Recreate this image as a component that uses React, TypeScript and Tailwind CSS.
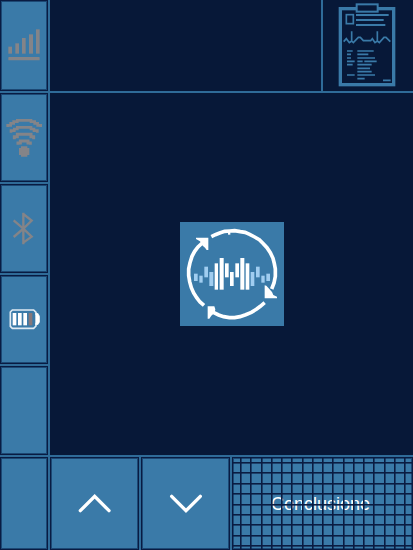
import type { ReactNode } from "react";

const tile =
  "flex items-center justify-center border border-[#091b42] bg-[#3a7aa8] shadow-[inset_0_0_0_1px_#1c4874]";

function StatusCell({ label, children }: { label?: string; children?: ReactNode }) {
  return (
    <li aria-label={label} className={`${tile} min-h-0 flex-1`}>
      {children}
    </li>
  );
}

function SignalIcon() {
  return (
    <svg viewBox="24 86 96 99" className="h-[33px] w-8 overflow-visible" fill="#848488" aria-hidden="true">
      <rect x="25" y="139" width="11" height="21" />
      <rect x="46" y="129" width="11" height="31" />
      <rect x="66" y="113" width="11" height="47" />
      <rect x="87" y="102" width="12" height="58" />
      <rect x="108" y="87" width="11" height="73" />
      <rect x="25" y="170" width="94" height="10" rx="2" />
    </svg>
  );
}

function WifiIcon() {
  return (
    <svg viewBox="18 83 108 120" className="h-10 w-9 overflow-visible" fill="none" stroke="#848488" strokeWidth="9" aria-hidden="true">
      <path d="M23 110V105H32V99H41V94H52V90H93V94H104V99H113V105H122V110" strokeWidth="8" />
      <path d="M33 127V121H43V116H52V111H93V116H102V121H112V127" strokeWidth="8" />
      <path d="M43 147V139H52V132H93V139H101V147" />
      <path d="M54 163V158H61V152H84V158H91V163" />
      <path d="M63 168H82V173H88V194H82V199H63V194H57V173H63Z" fill="#848488" stroke="none" />
    </svg>
  );
}

function BluetoothIcon() {
  return (
    <svg viewBox="36 99 72 96" className="h-8 w-6 overflow-visible" fill="none" stroke="#848488" strokeWidth="7" aria-hidden="true">
      <path d="M41 121L70 146L41 171M70 98V193M70 102L95 122L70 146L95 170L70 188" />
    </svg>
  );
}

function BatteryIcon() {
  return (
    <svg viewBox="24 120 96 60" className="h-5 w-8 overflow-visible" aria-hidden="true">
      <path d="M37 120H101L108 127V132H113L117 139V156L113 162H108V168L101 175H37L31 169V126Z" fill="none" stroke="#dfeaf2" strokeWidth="5" />
      <path d="M106 130H113L118 140V155L113 164H106Z" fill="#fff" />
      <g fill="#fff">
        <rect x="38" y="129" width="11" height="37" />
        <rect x="54" y="129" width="11" height="37" />
        <rect x="70" y="129" width="11" height="37" />
      </g>
      <rect x="86" y="129" width="11" height="37" fill="#85777a" />
    </svg>
  );
}

function ClipboardIcon() {
  return (
    <svg viewBox="76 8 180 255" className="h-[85px] w-[60px]" fill="none" stroke="#3a7aa8" aria-hidden="true">
      <rect x="83" y="25" width="160" height="228" strokeWidth="10" />
      <rect x="132" y="12" width="63" height="22" fill="#071838" strokeWidth="6" />
      <rect x="101" y="43" width="21" height="27" strokeWidth="5" />
      <path d="M130 44H228M130 59H213M130 74H218" strokeWidth="6" />
      <path
        d="M93 124L101 115L110 127L117 122V93V122L122 127L137 111H143L152 121H174L179 115L187 127L194 122V93V122L200 127L214 111H220L233 124"
        strokeWidth="5"
      />
      <path
        d="M103 152H120M103 162H115M103 173H115M103 183H126M103 193H120M103 224H126M134 152H183M134 162H167M134 173H187M134 183H150M155 183H192M134 193H177M134 204H172M134 214H177M134 224H187M134 235H156M211 240H234"
        strokeWidth="5"
      />
    </svg>
  );
}

function RecordingGraphic() {
  return (
    <svg viewBox="16 19 312 312" className="h-[104px] w-[104px] bg-[#3a7aa8]" role="img" aria-label="Elaborazione in corso">
      <g fill="none" stroke="#fff" strokeWidth="11">
        <path d="M110 63L122 57L135 52L150 47L165 46L180 45L197 48L211 50L225 56L240 64L254 72L266 84L277 96L287 111L295 128L299 144L302 160V182L298 202L291 220" />
        <path d="M270 261L257 272L245 281L230 290L213 297L196 303L180 306H164L147 303L132 298L116 290" />
        <path d="M88 269L76 259L66 246L57 232L50 216L45 198L42 180V160L46 141L52 122L60 107L70 94L86 79" />
      </g>
      <g fill="#fff">
        <path d="M64 66H101V103H96L91 96L84 90L76 77L64 70Z" />
        <path d="M270 209L275 210L284 220L292 229L296 238L307 243V248H270Z" />
        <path d="M99 272H119L122 281L120 291L110 300L104 309H99Z" />
        <path d="M160 46H167V57H160Z" />
        <rect x="120" y="143" width="10" height="79" />
        <rect x="135" y="127" width="12" height="95" />
        <rect x="151" y="143" width="11" height="42" />
        <rect x="166" y="169" width="11" height="42" />
        <rect x="182" y="143" width="11" height="42" />
        <rect x="197" y="127" width="12" height="95" />
        <rect x="213" y="143" width="11" height="79" />
      </g>
      <g fill="#a0cdf0">
        <rect x="58" y="174" width="11" height="22" />
        <rect x="74" y="180" width="10" height="21" />
        <rect x="89" y="153" width="11" height="32" />
        <rect x="104" y="169" width="12" height="42" />
        <rect x="228" y="169" width="11" height="42" />
        <rect x="244" y="153" width="11" height="32" />
        <rect x="260" y="180" width="10" height="21" />
        <rect x="275" y="174" width="11" height="22" />
      </g>
    </svg>
  );
}

function DisabledHatch() {
  return (
    <span aria-hidden="true" className="absolute inset-0">
      <span className="absolute inset-0 flex justify-between px-[7px]">
        {Array.from({ length: 17 }, (_, i) => (
          <span key={i} className="w-px bg-[#0a1c42] shadow-[1px_0_0_#0a1c4299]" />
        ))}
      </span>
      <span className="absolute inset-0 flex flex-col justify-between pt-1 pb-[3px]">
        {Array.from({ length: 9 }, (_, i) => (
          <span key={i} className="h-px bg-[#0a1c42] shadow-[0_1px_0_#0a1c4299]" />
        ))}
      </span>
    </span>
  );
}

export default function App() {
  return (
    <div className="flex h-screen flex-col gap-[2px] bg-[#2f6b98] font-['Liberation_Sans',Arial,sans-serif]">
      <div className="flex min-h-0 flex-1 gap-[2px]">
        <ul className="flex w-12 flex-col gap-[2px]">
          <li aria-label="Segnale" className={`${tile} h-[91px]`}>
            <SignalIcon />
          </li>
          <StatusCell label="Wi-Fi">
            <WifiIcon />
          </StatusCell>
          <StatusCell label="Bluetooth">
            <BluetoothIcon />
          </StatusCell>
          <StatusCell label="Batteria">
            <BatteryIcon />
          </StatusCell>
          <StatusCell />
        </ul>
        <div className="flex min-w-0 flex-1 flex-col gap-[2px]">
          <header className="flex h-[91px] gap-[2px]">
            <div className="flex-1 bg-[#071838]" />
            <button type="button" aria-label="Referto" className="flex w-[90px] items-center justify-center bg-[#071838]">
              <ClipboardIcon />
            </button>
          </header>
          <main className="flex flex-1 items-center justify-center bg-[#071838] pb-px">
            <RecordingGraphic />
          </main>
        </div>
      </div>
      <footer className="flex h-[93px] gap-[2px]">
        <div className={`${tile} w-12`} />
        <button type="button" aria-label="Su" className={`${tile} w-[89px]`}>
          <svg viewBox="234 162 99 60" className="h-5 w-[33px]" fill="none" stroke="#fff" strokeWidth="10" strokeLinecap="round" aria-hidden="true">
            <path d="M241 212L284 169L327 212" />
          </svg>
        </button>
        <button type="button" aria-label="Giù" className={`${tile} w-[89px]`}>
          <svg viewBox="102 147 99 60" className="h-5 w-[33px]" fill="none" stroke="#fff" strokeWidth="10" strokeLinecap="round" aria-hidden="true">
            <path d="M110 154L153 197L196 154" />
          </svg>
        </button>
        <button type="button" disabled className={`${tile} relative flex-1 pr-1 text-lg text-white`}>
          Conclusione
          <DisabledHatch />
        </button>
      </footer>
    </div>
  );
}
